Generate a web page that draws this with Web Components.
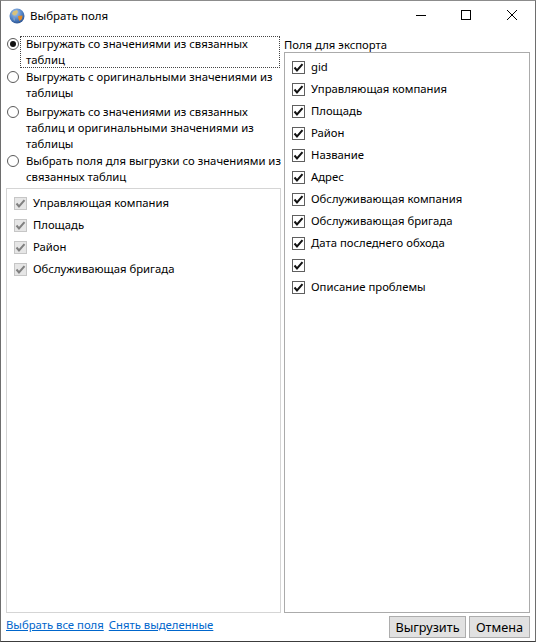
<!DOCTYPE html>
<html lang="ru">
<head>
<meta charset="utf-8">
<title>Выбрать поля</title>
<style>
html, body { margin: 0; padding: 0; background: #fff; }
body { font: 11.3px/16px "Noto Sans", "Open Sans", sans-serif; color: #000; width: 536px; height: 643px; overflow: hidden; }
</style>
</head>
<body>
<export-dialog heading="Выбрать поля">
  <radio-option checked focused>Выгружать со значениями из связанных таблиц</radio-option>
  <radio-option>Выгружать с оригинальными значениями из таблицы</radio-option>
  <radio-option style="margin-top:2px">Выгружать со значениями из связанных таблиц и оригинальными значениями из таблицы</radio-option>
  <radio-option>Выбрать поля для выгрузки со значениями из связанных таблиц</radio-option>
  <field-list slot="left-list">
    <field-check disabled>Управляющая компания</field-check>
    <field-check disabled>Площадь</field-check>
    <field-check disabled>Район</field-check>
    <field-check disabled>Обслуживающая бригада</field-check>
  </field-list>
  <field-list slot="right-list">
    <field-check>gid</field-check>
    <field-check>Управляющая компания</field-check>
    <field-check>Площадь</field-check>
    <field-check>Район</field-check>
    <field-check>Название</field-check>
    <field-check>Адрес</field-check>
    <field-check>Обслуживающая компания</field-check>
    <field-check>Обслуживающая бригада</field-check>
    <field-check>Дата последнего обхода</field-check>
    <field-check></field-check>
    <field-check>Описание проблемы</field-check>
  </field-list>
</export-dialog>

<script>
// Window frame with title bar, two columns and the footer
class ExportDialog extends HTMLElement {
    constructor() {
        super();
        this.attachShadow({ mode: 'open' });
        this.shadowRoot.innerHTML = `
            <style>
                :host {
                    display: flex;
                    flex-direction: column;
                    box-sizing: border-box;
                    width: 536px;
                    height: 642px;
                    background: #fff;
                    border-left: 1px solid #6e6e6e;
                    border-right: 1px solid #6e6e6e;
                    border-bottom: 1px solid #3c3c3c;
                    border-top: 1px solid #8c8c8c;
                }
                .titlebar {
                    display: flex;
                    align-items: center;
                    height: 30px;
                    flex: none;
                    padding-left: 8px;
                }
                .titlebar .name { margin-left: 5px; font-size: 11.5px; }
                .controls { display: flex; margin-left: auto; }
                .controls svg { display: block; width: 46px; height: 30px; }
                .body {
                    flex: 1;
                    min-height: 0;
                    display: grid;
                    grid-template-columns: 275px 246px;
                    column-gap: 3px;
                    padding: 5px 5px 0 5px;
                }
                .col { display: flex; flex-direction: column; min-height: 0; }
                .radios { display: flex; flex-direction: column; margin-bottom: 2px; }
                .caption { height: 16px; box-sizing: border-box; padding-top: 1px; flex: none; line-height: 16px; }
                .boxed { flex: 1; min-height: 0; display: flex; }
                .footer {
                    flex: none;
                    box-sizing: border-box;
                    height: 28px;
                    display: flex;
                    align-items: flex-start;
                    padding: 3px 5px 0 5px;
                }
                .links { display: flex; gap: 5px; padding-top: 1px; }
                .buttons { display: flex; gap: 3px; margin-left: auto; }
            </style>
            <div class="titlebar">
                <svg width="16" height="16" viewBox="0 0 16 16">
                    <defs>
                        <radialGradient id="sea" cx="0.4" cy="0.3" r="0.8">
                            <stop offset="0" stop-color="#a9c8ee"/>
                            <stop offset="0.6" stop-color="#4a7cc0"/>
                            <stop offset="1" stop-color="#24467f"/>
                        </radialGradient>
                    </defs>
                    <circle cx="8" cy="8" r="7.5" fill="url(#sea)"/>
                    <path d="M4 3.5 8 2 9 4 7 7 5 7.5 3 6Z" fill="#d8c27a"/>
                    <path d="M9 8 13.5 7.5 13 11 10.5 13 9.5 11Z" fill="#e58a24"/>
                    <path d="M4 9 6 10 6 13 4.5 12Z" fill="#7f9fc4"/>
                </svg>
                <span class="name">${this.getAttribute('heading')}</span>
                <div class="controls">
                    <svg viewBox="0 0 46 30"><path d="M19 14.5H29" stroke="#000"/></svg>
                    <svg viewBox="0 0 46 30"><rect x="18.5" y="9.5" width="9" height="9" fill="none" stroke="#000"/></svg>
                    <svg viewBox="0 0 46 30"><path d="M18 9 28 19M28 9 18 19" stroke="#000"/></svg>
                </div>
            </div>
            <div class="body">
                <div class="col">
                    <div class="radios"><slot></slot></div>
                    <div class="boxed"><slot name="left-list"></slot></div>
                </div>
                <div class="col">
                    <div class="caption">Поля для экспорта</div>
                    <div class="boxed"><slot name="right-list"></slot></div>
                </div>
            </div>
            <div class="footer">
                <div class="links">
                    <text-link>Выбрать все поля</text-link>
                    <text-link>Снять выделенные</text-link>
                </div>
                <div class="buttons">
                    <push-button style="width:77px">Выгрузить</push-button>
                    <push-button style="width:61px">Отмена</push-button>
                </div>
            </div>
        `;
    }
}

// Radio button with a wrapping label
class RadioOption extends HTMLElement {
    constructor() {
        super();
        this.attachShadow({ mode: 'open' });
        const checked = this.hasAttribute('checked');
        this.shadowRoot.innerHTML = `
            <style>
                :host {
                    display: flex;
                    align-items: flex-start;
                    padding: 0 1px;
                    margin-bottom: 1px;
                }
                svg { flex: none; margin-top: 2px; }
                .label { margin-left: 1px; padding-left: 6px; flex: 1; }
                .text { margin-right: -4px; }
                :host([focused]) .label { outline: 1px dotted #444; outline-offset: -1px; }
            </style>
            <svg width="12" height="12" viewBox="0 0 12 12">
                <circle cx="6" cy="6" r="5.5" fill="#fff" stroke="#5a5a5a"/>
                ${checked ? '<circle cx="6" cy="6" r="3" fill="#111"/>' : ''}
            </svg>
            <div class="label"><div class="text"><slot></slot></div></div>
        `;
    }
}

// Bordered list box
class FieldList extends HTMLElement {
    constructor() {
        super();
        this.attachShadow({ mode: 'open' });
        this.shadowRoot.innerHTML = `
            <style>
                :host {
                    display: flex;
                    flex-direction: column;
                    flex: 1;
                    box-sizing: border-box;
                    border: 1px solid #ababab;
                    padding: 3px 0 0 7px;
                }
                :host([slot="left-list"]) { border-color: #d5d5d5; }
            </style>
            <slot></slot>
        `;
    }
}

// Checkbox row, 22px high
class FieldCheck extends HTMLElement {
    constructor() {
        super();
        this.attachShadow({ mode: 'open' });
        const off = this.hasAttribute('disabled');
        const box = off ? '#c6c6c6' : '#5f5f5f';
        const fill = off ? '#e6e6e6' : '#fff';
        const tick = off ? '#808080' : '#111';
        this.shadowRoot.innerHTML = `
            <style>
                :host { display: flex; align-items: center; height: 22px; }
                svg { flex: none; margin-right: 6px; }
            </style>
            <svg width="13" height="13" viewBox="0 0 13 13">
                <rect x="0.5" y="0.5" width="12" height="12" fill="${fill}" stroke="${box}"/>
                <path d="M2.5 6.5 5 9.5 10.5 3.2" fill="none" stroke="${tick}" stroke-width="2"/>
            </svg>
            <span><slot></slot></span>
        `;
    }
}

class TextLink extends HTMLElement {
    constructor() {
        super();
        this.attachShadow({ mode: 'open' });
        this.shadowRoot.innerHTML = `
            <style>
                :host { display: inline-block; color: #0066cc; text-decoration: underline; cursor: pointer; }
            </style>
            <slot></slot>
        `;
    }
}

class PushButton extends HTMLElement {
    constructor() {
        super();
        this.attachShadow({ mode: 'open' });
        this.shadowRoot.innerHTML = `
            <style>
                :host {
                    display: flex;
                    align-items: center;
                    justify-content: center;
                    box-sizing: border-box;
                    height: 22px;
                    font-size: 12.7px;
                    background: #e1e1e1;
                    border: 1px solid #adadad;
                }
            </style>
            <slot></slot>
        `;
    }
}

customElements.define('radio-option', RadioOption);
customElements.define('field-list', FieldList);
customElements.define('field-check', FieldCheck);
customElements.define('text-link', TextLink);
customElements.define('push-button', PushButton);
customElements.define('export-dialog', ExportDialog);
</script>
</body>
</html>
